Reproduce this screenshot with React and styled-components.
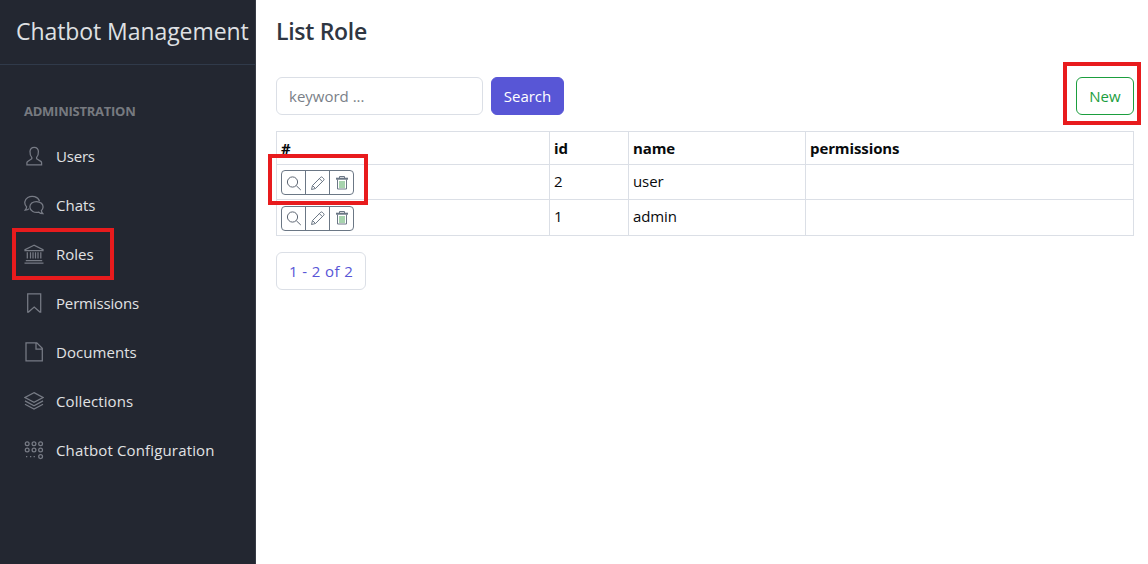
import React from 'react';
import styled, { createGlobalStyle, css } from 'styled-components';

const Global = createGlobalStyle`
  * { box-sizing: border-box; }
  html, body { margin: 0; background: #fff; overflow: hidden; }
  body, input, button { font-family: "Open Sans", "Noto Sans", sans-serif; font-size: 15px; }
`;

const Page = styled.div`
  position: relative;
  display: flex;
  width: 1148px;
  height: 564px;
  overflow: hidden;
`;

const Sidebar = styled.aside`
  flex: none;
  width: 256px;
  background: #232731;
  border-right: 1px solid #373b45;
`;

const Brand = styled.div`
  height: 65px;
  padding-left: 16px;
  border-bottom: 1px solid #303a4a;
  color: #dfe0e3;
  font-size: 23px;
  line-height: 63px;
  white-space: nowrap;
  letter-spacing: ${(p) => p.$track}px;
`;

const NavTitle = styled.div`
  padding: 36px 0 10px 24px;
  font-size: 13px;
  font-weight: 700;
  line-height: 20px;
  color: #777a80;
  letter-spacing: ${(p) => p.$track}px;
`;

const NavItem = styled.a`
  display: flex;
  align-items: center;
  height: 49px;
  padding-left: 24px;
  gap: 12px;
  color: #e1e2e4;
  white-space: nowrap;
  letter-spacing: ${(p) => p.$track}px;
`;

const NavIcon = styled.svg`
  flex: none;
  width: 20px;
  height: 20px;
  fill: none;
  stroke: #777b85;
  stroke-width: 1.25;
`;

const Main = styled.main`
  flex: 1;
  padding: 0 14px 0 20px;
`;

const Heading = styled.h1`
  margin: 0;
  height: 77px;
  font-size: 23px;
  font-weight: 600;
  line-height: 63px;
  color: #2f3642;
  letter-spacing: ${(p) => p.$track}px;
`;

const Toolbar = styled.div`
  display: flex;
  gap: 8px;
  height: 38px;
  margin-bottom: 16px;
`;

const SearchInput = styled.input`
  width: 207px;
  padding: 0 12px;
  border: 1px solid #dbdfe6;
  border-radius: 6px;
  outline: none;
  &::placeholder { color: #7a7f88; opacity: 1; }
`;

const Button = styled.button`
  height: 38px;
  padding: 0;
  border-radius: 6px;
  ${(p) => p.$outline
    ? css`width: 58px; margin-left: auto; background: #fff; border: 1px solid #1b9e3e; color: #1b9e3e;`
    : css`width: 73px; background: #5856d6; border: 1px solid #5856d6; color: #fff;`}
`;

const Table = styled.table`
  width: 858px;
  table-layout: fixed;
  border-collapse: separate;
  border-spacing: 0;
  border-top: 1px solid #dbdfe6;
  border-left: 1px solid #dbdfe6;
  color: #080a0c;
`;

const Row = styled.tr`
  height: ${(p) => p.$height}px;
`;

const Cell = styled.td`
  padding: 0 4px;
  border-right: 1px solid #dbdfe6;
  border-bottom: 1px solid #dbdfe6;
  text-align: left;
  line-height: 20px;
  letter-spacing: -0.1px;
`;

const BodyCell = styled(Cell)`
  padding-top: 6px;
  vertical-align: top;
`;

const ActionsCell = styled(Cell)`
  vertical-align: middle;
`;

const Actions = styled.div`
  display: flex;
  width: 73px;
  height: 25px;
  margin-top: 1px;
  border: 1px solid #6b7785;
  border-radius: 4px;
`;

const Action = styled.span`
  display: flex;
  align-items: center;
  justify-content: center;
  flex: none;
  width: ${(p) => (p.$last ? 23 : 24)}px;
  border-right: ${(p) => (p.$last ? 0 : 1)}px solid #6b7785;
`;

const ActionIcon = styled.svg`
  width: 16px;
  height: 16px;
  fill: none;
  stroke: ${(p) => p.$color};
  stroke-width: 1;
`;

const Pager = styled.div`
  display: inline-flex;
  align-items: center;
  width: 90px;
  height: 38px;
  margin-top: 16px;
  padding-left: 12px;
  border: 1px solid #dbdfe6;
  border-radius: 6px;
  color: #5856d6;
  white-space: nowrap;
  letter-spacing: ${(p) => p.$track}px;
`;

const Highlight = styled.div`
  position: absolute;
  left: ${(p) => p.$x}px;
  top: ${(p) => p.$y}px;
  width: ${(p) => p.$w}px;
  height: ${(p) => p.$h}px;
  border: 4px solid #e81b1d;
  pointer-events: none;
`;

const icons = {
  user: <path d="M7.8 11.4C6.3 10 5.9 8 6 5.4 6.2 2.5 7.9 1.300 10.200 1.300s4 1.200 4.200 4.100c.1 2.600-.3 4.600-1.800 6v1.300l4.200 2.700c.6.4.8.8.8 1.400v2H2.900v-2c0-.6.2-1 .8-1.400l4.100-2.700z" />,
  chat: <>
    <path d="M5.3 13.6c-1.200 1.100-2.500 1.500-4.200 1.500.9-1 1.500-2 1.500-3.200C-.3 9 .4 4.600 3.800 2.500 7.800.1 14 1.300 15.500 6.100" />
    <path d="M18.9 18.7c-1.800 0-3.100-.5-4.100-1.500-4.500 1-8.700-1.300-8.900-5-.2-3.400 2.900-5.700 6.500-5.700 4.200 0 7 2.800 6.600 6-.1 1.200-.7 2.200-1.600 3 0 1.300.6 2.300 1.500 3.200z" />
  </>,
  bank: <>
    <path d="M10 1.300L1 5.600v1h18v-1zM1.800 16.500h16.400M.5 19h19" />
    <path d="M3.300 8.200v6.300M6.500 8.200v6.300M9 8.200v6.300M11.500 8.200v6.300M14 8.200v6.300M16.800 8.200v6.300" />
  </>,
  bookmark: <path d="M3.700.8h13v18.200h-.8L10.200 14l-5.700 5h-.8z" />,
  file: <path d="M2 .8h10.800l5.500 5.500v12.600H2zM12 .8v6.200h6.300" />,
  layers: <>
    <path d="M10 1.600l9 4.900-9 4.900-9-4.900z" />
    <path d="M1 9.900l9 4.800 9-4.800M1 13.200l9 4.800 9-4.800" />
  </>,
  dots: <>
    {[3.2, 10, 16.6].map((x) => [3.7, 10].map((y) => <circle key={`${x}-${y}`} cx={x} cy={y} r="1.9" />))}
    <circle cx="16.6" cy="16.6" r="1.9" />
    <path d="M2 16.600h1.300M6 16.600h1.300M9.600 16.600h1.300" />
  </>,
};

const nav = [
  ['Users', 'user', -0.2], ['Chats', 'chat', 0], ['Roles', 'bank', 0], ['Permissions', 'bookmark', -0.16],
  ['Documents', 'file', 0.05], ['Collections', 'layers', 0.1], ['Chatbot Configuration', 'dots', 0.15],
];

const RowActions = () => (
  <Actions>
    <Action>
      <ActionIcon viewBox="0 0 16 16" $color="#5d6673">
        <circle cx="6.5" cy="7" r="5.1" /><path d="M10.300 10.700l4.500 4.300" />
      </ActionIcon>
    </Action>
    <Action>
      <ActionIcon viewBox="0 0 16 16" $color="#6b7785">
        <path d="M1.500 14.500l1-4L10.800 2.200q.7-.6 1.400 0l1.600 1.600q.6.700 0 1.400L5.500 13.500zM9.400 3.600l3 3M2.500 10.500l3 3" />
      </ActionIcon>
    </Action>
    <Action $last>
      <ActionIcon viewBox="0 0 15 16" $color="#6b7785">
        <path d="M5 3V1.500h5V3" />
        <path d="M1.500 3.700h12" strokeWidth="2" />
        <path d="M3 4.500v9.500h9V4.500" />
        <path d="M5.500 6v7M7.500 6v7M9.500 6v7" stroke="#4fa75d" />
      </ActionIcon>
    </Action>
  </Actions>
);

export default function App() {
  return (
    <Page>
      <Global />
      <Sidebar>
        <Brand $track={-0.07}>Chatbot Management</Brand>
        <NavTitle $track={-0.25}>ADMINISTRATION</NavTitle>
        {nav.map(([label, icon, track]) => (
          <NavItem key={label} $track={track}>
            <NavIcon viewBox="0 0 20 20">{icons[icon]}</NavIcon>
            <span>{label}</span>
          </NavItem>
        ))}
      </Sidebar>
      <Main>
        <Heading $track={-0.3}>List Role</Heading>
        <Toolbar>
          <SearchInput placeholder="keyword ..." />
          <Button>Search</Button>
          <Button $outline>New</Button>
        </Toolbar>
        <Table>
          <colgroup>
            <col style={{ width: 273 }} /><col style={{ width: 79 }} /><col style={{ width: 177 }} /><col style={{ width: 328 }} />
          </colgroup>
          <tbody>
            <Row $height={33}>
              {['#', 'id', 'name', 'permissions'].map((h) => <Cell as="th" key={h}>{h}</Cell>)}
            </Row>
            {[[2, 'user', 35], [1, 'admin', 36]].map(([id, name, h]) => (
              <Row key={id} $height={h}>
                <ActionsCell><RowActions /></ActionsCell>
                <BodyCell>{id}</BodyCell>
                <BodyCell>{name}</BodyCell>
                <BodyCell />
              </Row>
            ))}
          </tbody>
        </Table>
        <Pager $track={0.4}>1 - 2 of 2</Pager>
      </Main>
      <Highlight $x={12} $y={228} $w={102} $h={52} />
      <Highlight $x={268} $y={154} $w={100} $h={51} />
      <Highlight $x={1063} $y={62} $w={78} $h={63} />
    </Page>
  );
}
